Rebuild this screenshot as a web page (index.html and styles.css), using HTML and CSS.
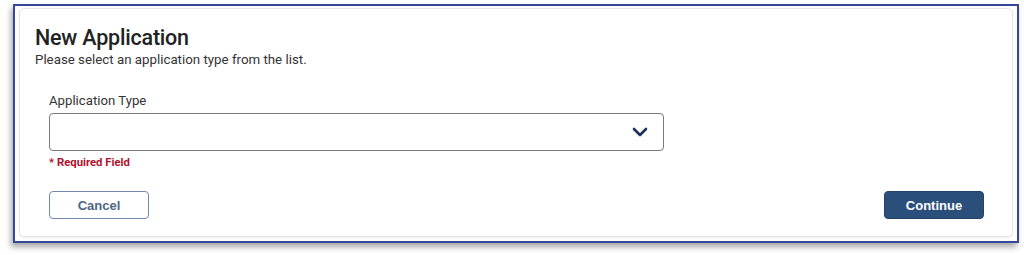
FILE: index.html
```html
<!DOCTYPE html>
<html lang="en">
<head>
  <meta charset="UTF-8">
  <title>New Application</title>
  <link rel="stylesheet" href="styles.css">
</head>
<body>
  <div class="frame">
    <div class="card">
      <h1 class="title">New Application</h1>
      <p class="subtitle">Please select an application type from the list.</p>

      <div class="form">
        <label class="field-label" for="appType">Application Type</label>
        <div class="select">
          <span class="select-value"></span>
          <svg class="chevron" width="16" height="10" viewBox="0 0 16 10">
            <path d="M2 2 L8 8 L14 2" fill="none" stroke="#1c2f5a" stroke-width="2.6" stroke-linecap="round" stroke-linejoin="round"/>
          </svg>
        </div>
        <div class="required">* Required Field</div>

        <div class="actions">
          <button class="btn btn-cancel">Cancel</button>
          <button class="btn btn-continue">Continue</button>
        </div>
      </div>
    </div>
  </div>
</body>
</html>
```

FILE: styles.css
```css
/* base */
* { margin: 0; padding: 0; box-sizing: border-box; }
html, body { width: 100%; height: 100%; background: #fff; overflow: hidden; }
body { font-family: Roboto, "Liberation Sans", sans-serif; color: #222; }

/* outer blue frame */
.frame {
  width: 1006px; height: 239px;
  margin: 4px 0 0 13px;
  border: 2px solid #34479a;
  padding: 2px 4px 4px 4px;
  box-shadow: -2px 4px 6px rgba(0,0,0,0.35);
  background: #fff;
}

/* card */
.card {
  height: 100%;
  border: 1px solid #e4e4e4;
  border-radius: 5px;
  box-shadow: 0 1px 2px rgba(0,0,0,0.08);
  padding: 16px 28px 0 15px;
}
.title { font-size: 21.5px; font-weight: 500; color: #222; line-height: 26px; letter-spacing: -0.2px; }
.subtitle { font-size: 13.3px; color: #333; line-height: 16px; margin-top: 1px; }

/* form */
.form { padding-left: 14px; margin-top: 24px; }
.field-label { display: block; font-size: 13.2px; color: #333; line-height: 17px; }
.select {
  width: 615px; height: 38px; margin-top: 4px;
  border: 1.5px solid #7a7a7a; border-radius: 4px;
  display: flex; align-items: center; justify-content: flex-end;
  padding-right: 15px;
}
.required { font-size: 11.3px; font-weight: 700; color: #b3122e; margin-top: 5px; line-height: 14px; }

.actions { display: flex; justify-content: space-between; margin-top: 21px; }
.btn {
  width: 100px; height: 28px; border-radius: 4px;
  font-family: "Liberation Sans", Arial, sans-serif; font-size: 13px; font-weight: 700;
  cursor: pointer;
}
.btn-cancel { background: #fff; border: 1.5px solid #7089ad; color: #4f6585; }
.btn-continue { background: #2b4f7b; border: 1px solid #24446c; color: #fff; }
```
